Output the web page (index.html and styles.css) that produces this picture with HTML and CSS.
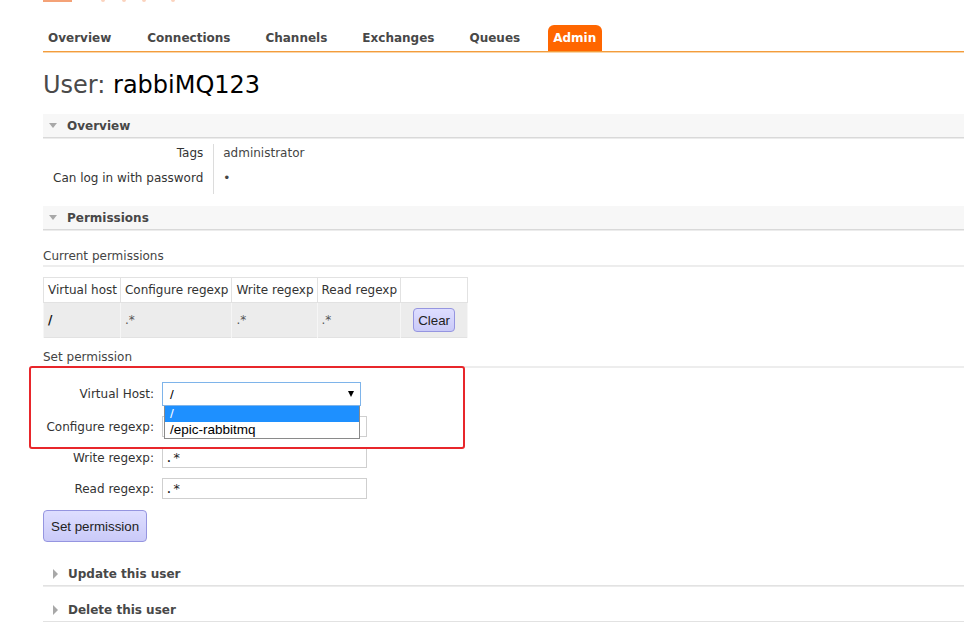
FILE: index.html
```html
<!DOCTYPE html>
<html>
<head>
<meta charset="utf-8">
<link rel="stylesheet" href="styles.css">
</head>
<body>
<div class="logo-strip">
  <span class="logo-bar"></span>
  <span class="logo-dot d1"></span>
  <span class="logo-dot d2"></span>
  <span class="logo-dot d3"></span>
  <span class="logo-dot d4"></span>
</div>
<div class="page">
  <nav class="tabs">
    <a class="tab">Overview</a>
    <a class="tab">Connections</a>
    <a class="tab">Channels</a>
    <a class="tab">Exchanges</a>
    <a class="tab">Queues</a>
    <a class="tab active">Admin</a>
  </nav>

  <h1 class="title"><span class="title-pre">User:</span> <span class="title-name">rabbiMQ123</span></h1>

  <section class="sec">
    <div class="sec-head open"><span class="tri-down"></span>Overview</div>
    <table class="facts">
      <tr><th>Tags</th><td>administrator</td></tr>
      <tr><th>Can log in with password</th><td>&#8226;</td></tr>
    </table>
  </section>

  <section class="sec">
    <div class="sec-head open"><span class="tri-down"></span>Permissions</div>
    <h3 class="sub">Current permissions</h3>
    <table class="perms">
      <tr>
        <th>Virtual host</th>
        <th>Configure regexp</th>
        <th>Write regexp</th>
        <th>Read regexp</th>
        <th class="c-act"></th>
      </tr>
      <tr class="data">
        <td class="vh">/</td>
        <td>.*</td>
        <td>.*</td>
        <td>.*</td>
        <td class="c-act"><button class="btn btn-sm">Clear</button></td>
      </tr>
    </table>

    <h3 class="sub sub2">Set permission</h3>
    <div class="form">
      <div class="row">
        <label class="lbl">Virtual Host:</label>
        <div class="sel-wrap">
          <div class="sel"><span>/</span><span class="sel-arrow"></span></div>
          <div class="dropdown">
            <div class="opt hi">/</div>
            <div class="opt">/epic-rabbitmq</div>
          </div>
        </div>
      </div>
      <div class="row">
        <label class="lbl">Configure regexp:</label>
        <div class="inp inp-cfg">.*</div>
      </div>
      <div class="row">
        <label class="lbl">Write regexp:</label>
        <div class="inp">.*</div>
      </div>
      <div class="row">
        <label class="lbl">Read regexp:</label>
        <div class="inp">.*</div>
      </div>
      <button class="btn btn-lg">Set permission</button>
    </div>
  </section>

  <section class="sec sec-closed">
    <div class="sec-head"><span class="tri-right"></span>Update this user</div>
  </section>
  <section class="sec sec-closed sec-last">
    <div class="sec-head"><span class="tri-right"></span>Delete this user</div>
  </section>
</div>
<div class="annot"></div>
</body>
</html>
```

FILE: styles.css
```css
html, body {
  margin: 0;
  padding: 0;
  background: #fff;
}
body {
  font-family: "DejaVu Sans", Verdana, sans-serif;
  font-size: 12px;
  color: #444;
  overflow: hidden;
}

.logo-strip {
  position: relative;
  height: 2px;
}
.logo-bar {
  position: absolute;
  left: 43px;
  top: 0;
  width: 29px;
  height: 2px;
  background: #f4a277;
}
.logo-dot {
  position: absolute;
  top: 0;
  width: 4px;
  height: 2px;
  background: #fbd3bd;
  border-radius: 0 0 2px 2px;
}
.d1 { left: 101px; }
.d2 { left: 122px; }
.d3 { left: 142px; }
.d4 { left: 171px; }

.page {
  padding-left: 43px;
}

.tabs {
  display: flex;
  align-items: flex-end;
  gap: 25px;
  margin-top: 23px;
  height: 26px;
  border-bottom: 1px solid #f39c3c;
  box-shadow: 0 1px 0 #fad5a8;
}
.tab {
  display: block;
  padding: 1px 5px 0;
  line-height: 25px;
  font-weight: bold;
  color: #484848;
  border-radius: 6px 6px 0 0;
}
.tab:nth-child(2) {
  margin-left: 1px;
}
.tab.active {
  background: #ff6600;
  color: #fff;
  padding: 1px 6px 0 5px;
  margin-left: -2px;
}

.title {
  margin: 19px 0 0;
  font-size: 24px;
  line-height: 28px;
  font-weight: normal;
}
.title-pre { color: #4a4a4a; }
.title-name { color: #000; }

.sec {
  margin-top: 12px;
}
.title + .sec {
  margin-top: 15px;
}
.sec-head {
  display: flex;
  align-items: center;
  height: 23px;
  padding-left: 6px;
  font-weight: bold;
  color: #484848;
  border-bottom: 1px solid #d9d9d9;
  box-shadow: 0 1px 0 #ececec;
}
.sec-head.open {
  background: #f7f7f7;
}
.tri-down {
  width: 0;
  height: 0;
  border-left: 4px solid transparent;
  border-right: 4px solid transparent;
  border-top: 5px solid #a8a8a8;
  margin-right: 10px;
}
.tri-right {
  width: 0;
  height: 0;
  border-top: 5px solid transparent;
  border-bottom: 5px solid transparent;
  border-left: 5px solid #a8a8a8;
  margin-left: 4px;
  margin-right: 10px;
}

.facts {
  border-collapse: collapse;
  margin-top: 6px;
}
.facts th {
  font-weight: normal;
  color: #333;
  text-align: right;
  padding: 1px 10px 7px;
  line-height: 17px;
  border-right: 1px solid #dcdcdc;
  white-space: nowrap;
}
.facts td {
  color: #444;
  padding: 1px 9px 7px;
  line-height: 17px;
}

.sub {
  margin: 19px 0 0;
  font-size: 12px;
  font-weight: normal;
  line-height: 15px;
  padding-bottom: 1px;
  color: #444;
  border-bottom: 2px solid #ededed;
}
.sub2 {
  margin-top: 12px;
}

.perms {
  border-collapse: collapse;
  margin-top: 10px;
  border: 1px solid #e2e2e2;
}
.perms th {
  font-weight: normal;
  color: #333;
  text-align: left;
  height: 24px;
  padding: 0 3px 0 4px;
  border: 1px solid #e2e2e2;
  white-space: nowrap;
}
.perms .data td {
  background: #ececec;
  height: 34px;
  padding: 0 4px;
  color: #555;
  border-left: 1px solid #f6f6f6;
  border-right: 1px solid #f6f6f6;
  vertical-align: middle;
}
.perms .data td.vh {
  font-weight: bold;
  color: #111;
}
.perms .c-act {
  width: 67px;
  padding: 0;
  text-align: center;
  box-sizing: border-box;
}
.perms .data td.c-act {
  padding: 0;
}

.btn {
  font-family: "Liberation Sans", Arial, sans-serif;
  font-size: 13.33px;
  color: #222;
  background: linear-gradient(#dedeff, #cacaf8);
  border: 1px solid #9595e0;
  border-radius: 4px;
  box-sizing: border-box;
}
.btn-sm {
  height: 24px;
  padding: 0 4px;
}
.btn-lg {
  height: 32px;
  padding: 0 7px;
  margin-top: 11px;
}

.form {
  margin-top: 14px;
  display: flex;
  flex-direction: column;
  align-items: flex-start;
}
.row {
  display: flex;
  align-items: center;
  margin-bottom: 10px;
}
.row:last-of-type {
  margin-bottom: 0;
}
.lbl {
  width: 111px;
  text-align: right;
  margin-right: 8px;
  color: #333;
  white-space: nowrap;
}
.sel-wrap {
  position: relative;
}
.sel {
  box-sizing: border-box;
  width: 199px;
  height: 24px;
  border: 1px solid #7eb4ea;
  display: flex;
  align-items: center;
  justify-content: space-between;
  padding: 0 5px 0 7px;
  font-family: "Liberation Sans", Arial, sans-serif;
  font-size: 13.5px;
  color: #000;
  background: #fff;
}
.sel-arrow {
  width: 0;
  height: 0;
  border-left: 3.5px solid transparent;
  border-right: 3.5px solid transparent;
  border-top: 6px solid #000;
  margin-right: 1px;
}
.dropdown {
  position: absolute;
  left: 2px;
  top: 24px;
  width: 196px;
  box-sizing: border-box;
  border: 1px solid #8a8a8a;
  border-top: none;
  background: #fff;
  z-index: 2;
  font-family: "Liberation Sans", Arial, sans-serif;
  font-size: 13.5px;
}
.opt {
  height: 16px;
  line-height: 16px;
  padding-left: 5px;
  color: #000;
}
.opt.hi {
  background: #1e90ff;
  color: #fff;
}
.inp {
  box-sizing: border-box;
  width: 205px;
  height: 21px;
  border: 1px solid #cfcfcf;
  padding: 0 2px;
  line-height: 19px;
  font-family: "DejaVu Sans Mono", monospace;
  font-size: 13px;
  color: #222;
  background: #fff;
}

.sec-closed {
  margin-top: 20px;
}
.sec-closed + .sec-closed {
  margin-top: 12px;
}
.sec-closed .sec-head {
  height: 23px;
  border-bottom: 1px solid #e2e2e2;
  box-shadow: 0 1px 0 #ececec;
}

.annot {
  position: absolute;
  left: 29px;
  top: 366px;
  width: 432px;
  height: 79px;
  border: 2px solid #e8262b;
  border-radius: 3px;
  pointer-events: none;
  z-index: 3;
}
```
